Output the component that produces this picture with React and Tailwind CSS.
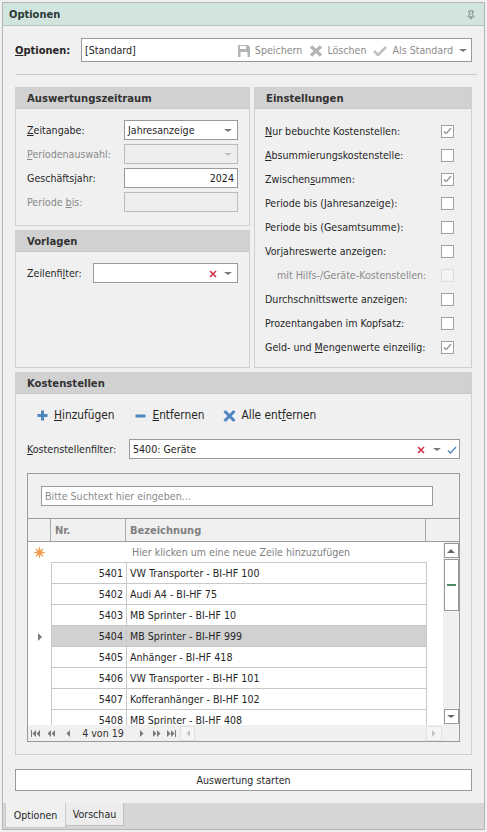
import { Pin } from 'lucide-react';

const rows = [
  ['5401', 'VW Transporter - BI-HF 100'],
  ['5402', 'Audi A4 - BI-HF 75'],
  ['5403', 'MB Sprinter - BI-HF 10'],
  ['5404', 'MB Sprinter - BI-HF 999'],
  ['5405', 'Anhänger - BI-HF 418'],
  ['5406', 'VW Transporter - BI-HF 101'],
  ['5407', 'Kofferanhänger - BI-HF 102'],
  ['5408', 'MB Sprinter - BI-HF 408'],
];

function Caret({ className = 'border-t-[#7a7a7a]' }) {
  return <span className={`inline-block h-0 w-0 border-x-[4px] border-t-[3px] border-x-transparent ${className}`} />;
}

function RedX() {
  return (
    <svg width="8" height="8" viewBox="0 0 8 8" className="shrink-0">
      <path d="M1 1l6 6M7 1L1 7" stroke="#d0344a" strokeWidth="1.6" />
    </svg>
  );
}

function NavIcon({ d, w = 9, className = '' }) {
  return (
    <svg width={w} height="7" viewBox={`0 0 ${w} 7`} className={`shrink-0 ${className}`}>
      <path d={d} fill="#7a7a7a" />
    </svg>
  );
}

function GroupHead({ children }) {
  return (
    <div className="flex h-[21px] shrink-0 items-center border-b border-[#c8c8c8] bg-[#d1d1d1] pl-[11px] pt-[1px] text-[11.2px] font-bold text-[#333]">
      {children}
    </div>
  );
}

function Field({ label, disabled, className, children }) {
  return (
    <div className={`flex h-[20px] items-center whitespace-nowrap ${className}`}>
      <span className={`pt-[1px] ${disabled ? 'text-[#8a8a8a]' : ''}`}>{label}</span>
      {children}
    </div>
  );
}

function Check({ label, checked, disabled, indent }) {
  return (
    <div className={`flex h-[24px] items-center justify-between whitespace-nowrap pr-[17px] ${disabled ? 'text-[#8a8a8a]' : ''} ${indent ? 'pl-[12px]' : ''}`}>
      <span className="pt-[1px]">{label}</span>
      <span className={`flex h-[13px] w-[13px] items-center justify-center border ${disabled ? 'border-[#dcdcdc] bg-[#f4f4f4]' : 'border-[#a0a0a0] bg-white'} ${checked ? 'bg-[#f4f4f4]' : ''}`}>
        {checked && (
          <svg width="9" height="8" viewBox="0 0 9 8">
            <path d="M1 4.5l2.3 2L8 1.2" fill="none" stroke="#808080" strokeWidth="1.1" />
          </svg>
        )}
      </span>
    </div>
  );
}

export default function App() {
  return (
    <div className="h-[832px] w-[487px] overflow-hidden bg-[#f0f0f0] p-[2px] font-['DejaVu_Sans_Condensed','Liberation_Sans',sans-serif] text-[10.6px] leading-none text-[#262626]">
      <div className="flex h-[828px] w-[483px] flex-col border border-[#b4b4b4]">
        {/* title */}
        <div className="flex h-[23px] shrink-0 items-center justify-between border-b border-[#b6c4bf] bg-[#d1e5de] pl-[6px] pr-[8px] pt-[1px] text-[11px] font-bold text-[#2b3a36]">
          Optionen
          <Pin size={10} strokeWidth={1.4} className="text-[#444]" />
        </div>

        <div className="flex min-h-0 flex-1 flex-col px-[12px]">
          {/* options row */}
          <div className="mt-[12px] flex h-[24px] shrink-0 items-center">
            <span className="w-[66px] pt-[1px] text-[11px] font-bold"><u>O</u>ptionen:</span>
            <div className="flex h-[24px] flex-1 items-center border border-[#9a9a9a] bg-white pl-[3px] pr-[4px] pt-[1px]">
              <span className="flex-1">[Standard]</span>
              <svg width="12" height="12" viewBox="0 0 12 12" className="mr-[5px]">
                <path d="M0 0h10l2 2v10H0z" fill="#b5b5b5" />
                <path d="M2 1h6v3H2zM2.500 7h7v5h-7z" fill="#fff" />
              </svg>
              <span className="mr-[7px] text-[#8c8c8c]">Speichern</span>
              <svg width="14" height="12" viewBox="0 0 14 12" className="mr-[4px]">
                <path d="M2 1.500l10 9M12 1.500l-10 9" stroke="#b5b5b5" strokeWidth="3.400" />
              </svg>
              <span className="mr-[7px] text-[#8c8c8c]">Löschen</span>
              <svg width="14" height="11" viewBox="0 0 14 11" className="mr-[5px]">
                <path d="M1 6l4 4 8-8" fill="none" stroke="#c0c0c0" strokeWidth="2.600" />
              </svg>
              <span className="mr-[6px] text-[#8c8c8c]">Als Standard</span>
              <Caret />
            </div>
          </div>
          <div className="ml-[1px] mt-[12px] h-px w-[461px] shrink-0 bg-[#c8c8c8]" />

          {/* two columns */}
          <div className="mt-[12px] flex h-[281px] shrink-0 justify-between">
            <div className="flex w-[235px] flex-col justify-between">
              <div className="flex h-[139px] flex-col border border-[#d0d0d0]">
                <GroupHead>Auswertungszeitraum</GroupHead>
                <div className="flex flex-col gap-[4px] px-[11px] pt-[11px]">
                  <Field label={<><u>Z</u>eitangabe:</>}>
                    <div className="ml-auto flex h-[20px] w-[114px] items-center justify-between border border-[#9a9a9a] bg-white pl-[3px] pr-[5px] pt-[1px]">
                      Jahresanzeige <Caret />
                    </div>
                  </Field>
                  <Field disabled label={<><u>P</u>eriodenauswahl:</>}>
                    <div className="ml-auto flex h-[20px] w-[114px] items-center justify-end border border-[#bdbdbd] bg-[#eeeeee] pr-[5px] pt-[1px]">
                      <Caret className="border-t-[#c0c0c0]" />
                    </div>
                  </Field>
                  <Field label="Geschäftsjahr:">
                    <div className="ml-auto flex h-[20px] w-[114px] items-center justify-end border border-[#9a9a9a] bg-white pr-[3px] pt-[1px]">2024</div>
                  </Field>
                  <Field disabled label={<>Periode <u>b</u>is:</>}>
                    <div className="ml-auto h-[20px] w-[114px] border border-[#bdbdbd] bg-[#eeeeee]" />
                  </Field>
                </div>
              </div>
              <div className="flex h-[138px] flex-col border border-[#d0d0d0]">
                <GroupHead>Vorlagen</GroupHead>
                <div className="px-[11px] pt-[11px]">
                  <Field label={<>Zeilenfi<u>l</u>ter:</>}>
                    <div className="ml-auto flex h-[20px] w-[145px] items-center justify-end gap-[7px] border border-[#9a9a9a] bg-white pr-[5px] pt-[1px]">
                      <RedX />
                      <Caret />
                    </div>
                  </Field>
                </div>
              </div>
            </div>

            <div className="flex w-[218px] flex-col border border-[#d0d0d0]">
              <GroupHead>Einstellungen</GroupHead>
              <div className="flex flex-col pl-[10px] pt-[10px]">
                <Check checked label={<><u>N</u>ur bebuchte Kostenstellen:</>} />
                <Check label={<><u>A</u>bsummierungskostenstelle:</>} />
                <Check checked label={<>Zwischen<u>s</u>ummen:</>} />
                <Check label="Periode bis (Jahresanzeige):" />
                <Check label="Periode bis (Gesamtsumme):" />
                <Check label="Vorjahreswerte anzeigen:" />
                <Check disabled indent label="mit Hilfs-/Geräte-Kostenstellen:" />
                <Check label="Durchschnittswerte anzeigen:" />
                <Check label="Prozentangaben im Kopfsatz:" />
                <Check checked label={<>Geld- und <u>M</u>engenwerte einzeilig:</>} />
              </div>
            </div>
          </div>

          {/* Kostenstellen */}
          <div className="mt-[4px] flex h-[383px] shrink-0 flex-col border border-[#d0d0d0]">
            <GroupHead>Kostenstellen</GroupHead>
            <div className="flex flex-1 flex-col px-[11px]">
              <div className="mt-[13px] flex h-[16px] items-center pl-[10px] pt-[1px] text-[11.8px]">
                <svg width="11" height="11" viewBox="0 0 11 11" className="mr-[6px]">
                  <path d="M5.500 0.500v10M0.500 5.500h10" stroke="#4f86c0" strokeWidth="3" />
                </svg>
                <span><u>H</u>inzufügen</span>
                <svg width="11" height="4" viewBox="0 0 11 4" className="ml-[21px] mr-[6px]">
                  <path d="M0.500 2h10" stroke="#4f86c0" strokeWidth="3" />
                </svg>
                <span><u>E</u>ntfernen</span>
                <svg width="13" height="12" viewBox="0 0 13 12" className="ml-[19px] mr-[5px]">
                  <path d="M1.500 1l10 10M11.500 1l-10 10" stroke="#4f86c0" strokeWidth="3" />
                </svg>
                <span>Alle ent<u>f</u>ernen</span>
              </div>

              <Field className="mt-[16px]" label={<><u>K</u>ostenstellenfilter:</>}>
                <div className="ml-auto flex h-[20px] w-[331px] items-center border border-[#9a9a9a] bg-white pl-[3px] pr-[2px] pt-[1px]">
                  <span className="flex-1">5400: Geräte</span>
                  <RedX />
                  <span className="ml-[8px] mr-[6px] flex"><Caret /></span>
                  <svg width="10" height="8" viewBox="0 0 10 8">
                    <path d="M1 4.500l2.500 2.500L9 1" fill="none" stroke="#4f86c0" strokeWidth="1.400" />
                  </svg>
                </div>
              </Field>

              {/* grid */}
              <div className="mt-[14px] flex h-[269px] w-[433px] flex-col border border-[#9a9a9a]">
                <div className="flex h-[44px] shrink-0 items-start pl-[13px] pt-[12px]">
                  <div className="flex h-[20px] w-[392px] items-center border border-[#9a9a9a] bg-white pl-[3px] pt-[1px] text-[#8a8a8a]">
                    Bitte Suchtext hier eingeben...
                  </div>
                </div>
                <div className="flex h-[24px] shrink-0 border-y border-[#9a9a9a] text-[11px] font-bold text-[#808080]">
                  <div className="w-[23px] border-r border-[#a8a8a8]" />
                  <div className="flex w-[75px] items-center border-r border-[#a8a8a8] pl-[4px] pt-[1px]">Nr.</div>
                  <div className="flex w-[300px] items-center border-r border-[#a8a8a8] pl-[4px] pt-[1px]">Bezeichnung</div>
                </div>

                <div className="flex min-h-0 flex-1">
                  <div className="flex w-[415px] flex-col overflow-hidden bg-white">
                    <div className="flex h-[20px] shrink-0 items-center">
                      <div className="flex w-[23px] justify-center">
                        <svg width="11" height="11" viewBox="0 0 11 11">
                          <path d="M5.500 0v11M0 5.500h11M1.700 1.700l7.600 7.600M9.300 1.700L1.700 9.300" stroke="#f0a050" strokeWidth="1.100" />
                          <circle cx="5.500" cy="5.500" r="3" fill="#f0a050" />
                        </svg>
                      </div>
                      <span className="pl-[81px] pt-[1px] text-[#808080]">Hier klicken um eine neue Zeile hinzuzufügen</span>
                    </div>
                    <div className="flex min-h-0 flex-1">
                      <div className="flex w-[23px] shrink-0 flex-col pt-[64px]">
                        <div className="flex h-[21px] items-center justify-center pl-[1px]">
                          <span className="h-0 w-0 border-y-[4px] border-l-[4px] border-y-transparent border-l-[#7a7a7a]" />
                        </div>
                      </div>
                      <div className="w-[376px] shrink-0 border-t border-[#c8c8c8]">
                        {rows.map(([nr, name], i) => (
                          <div key={nr} className={`flex h-[21px] items-center border-x border-b border-[#c8c8c8] ${i === 3 ? 'bg-[#d1d1d1]' : ''}`}>
                            <div className="flex h-full w-[75px] items-center justify-end border-r border-[#c8c8c8] pr-[3px] pt-[1px]">{nr}</div>
                            <div className="pl-[3px] pt-[1px]">{name}</div>
                          </div>
                        ))}
                      </div>
                    </div>
                  </div>
                  <div className="flex flex-1 flex-col items-center bg-[#f0f0f0] pt-[1px]">
                    <div className="flex h-[15px] w-[15px] items-center justify-center border border-[#9a9a9a] bg-white">
                      <span className="h-0 w-0 border-x-[4px] border-b-[4px] border-x-transparent border-b-[#666]" />
                    </div>
                    <div className="mt-[1px] flex h-[52px] w-[15px] items-center justify-center border border-[#9a9a9a] bg-white">
                      <span className="mb-[1px] h-[2px] w-[9px] bg-[#4f8a68]" />
                    </div>
                    <div className="mb-[1px] mt-auto flex h-[15px] w-[15px] items-center justify-center border border-[#9a9a9a] bg-white">
                      <Caret className="border-t-[#666]" />
                    </div>
                  </div>
                </div>

                <div className="flex h-[16px] shrink-0 items-center bg-[#f0f0f0] pl-[3px]">
                  <NavIcon d="M0 0h1v7H0zM5 0v7L1.500 3.500zM9 0v7L5.500 3.500z" />
                  <NavIcon className="ml-[7px]" d="M4 0v7L0.500 3.500zM8 0v7L4.500 3.500z" />
                  <NavIcon w={4} className="ml-[10px]" d="M4 0v7L0.500 3.500z" />
                  <span className="w-[66px] whitespace-nowrap pt-[1px] text-center text-[#333]">4 von 19</span>
                  <NavIcon w={4} className="ml-[4px]" d="M0 0v7l3.500-3.500z" />
                  <NavIcon className="ml-[9px]" d="M0 0v7l3.500-3.500zM4 0v7l3.500-3.500z" />
                  <NavIcon className="ml-[5px]" d="M0 0v7l3.500-3.500zM4 0v7l3.500-3.500zM8 0h1v7H8z" />
                  <div className="ml-[4px] flex h-[15px] w-[15px] items-center justify-center border border-[#e2e2e2] bg-[#f6f6f6]">
                    <NavIcon w={4} d="M4 0v7L0.500 3.500z" className="opacity-40" />
                  </div>
                  <div className="ml-auto mr-[17px] flex h-[15px] w-[16px] items-center justify-center border border-[#e2e2e2] bg-[#f6f6f6]">
                    <NavIcon w={4} d="M0 0v7l3.500-3.500z" className="opacity-40" />
                  </div>
                </div>
              </div>
            </div>
          </div>

          <button className="mt-[14px] flex h-[22px] w-[457px] shrink-0 items-center justify-center border border-[#9a9a9a] bg-white pt-[1px]">
            Auswertung starten
          </button>
        </div>

        {/* tabs */}
        <div className="flex h-[26px] shrink-0 items-start bg-[#d6d6d6] pl-[2px]">
          <div className="flex h-[25px] w-[61px] items-center justify-center border-x border-b border-[#c8c8c8] bg-[#f0f0f0] pt-[1px]">Optionen</div>
          <div className="flex h-[23px] w-[58px] items-center justify-center border-b border-r border-[#c0c0c0] bg-[#ececec] pt-[1px]">Vorschau</div>
        </div>
      </div>
    </div>
  );
}
